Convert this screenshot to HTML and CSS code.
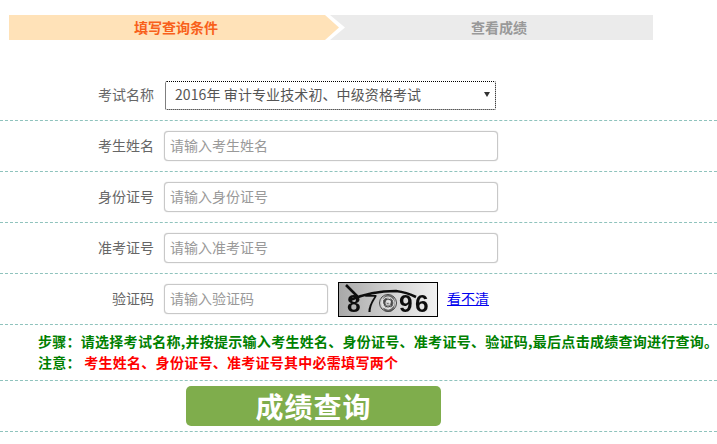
FILE: index.html
```html
<!DOCTYPE html>
<html lang="zh-CN">
<head>
<meta charset="utf-8">
<title>成绩查询</title>
<link rel="stylesheet" href="styles.css">
</head>
<body>
<div class="steps">
  <div class="step-edge"><div class="step-current">填写查询条件</div></div>
  <div class="step-next">查看成绩</div>
</div>
<form class="form">
  <div class="row">
    <label class="label">考试名称</label>
    <div class="select-wrap">
      <select class="select"><option>2016年 审计专业技术初、中级资格考试</option></select>
    </div>
  </div>
  <div class="row">
    <label class="label">考生姓名</label>
    <input class="field" placeholder="请输入考生姓名">
  </div>
  <div class="row">
    <label class="label">身份证号</label>
    <input class="field" placeholder="请输入身份证号">
  </div>
  <div class="row">
    <label class="label">准考证号</label>
    <input class="field" placeholder="请输入准考证号">
  </div>
  <div class="row">
    <label class="label">验证码</label>
    <input class="field field-short" placeholder="请输入验证码">
    <svg class="captcha" width="100" height="35" viewBox="0 0 100 35" role="img" aria-label="验证码图片">
      <defs>
        <linearGradient id="cbg" x1="0" y1="0" x2="1" y2="0">
          <stop offset="0" stop-color="#a8a8a8"/>
          <stop offset="0.5" stop-color="#cfcfcf"/>
          <stop offset="1" stop-color="#f2f2f2"/>
        </linearGradient>
        <filter id="cblur"><feGaussianBlur stdDeviation="0.7"/></filter>
      </defs>
      <rect x="0.5" y="0.5" width="99" height="34" fill="url(#cbg)" stroke="#000"/>
      <g filter="url(#cblur)">
        <text class="captcha-text" y="29.5"><tspan x="9">8</tspan><tspan class="captcha-thin" x="26">7</tspan><tspan class="captcha-faint" x="44">9</tspan><tspan x="61">9</tspan><tspan x="77">6</tspan></text>
        <path d="M8 3 L21 16 M12 18 C26 12 42 9 58 9 C66 10 72 12 78 15" fill="none" stroke="#111" stroke-width="2.6"/>
        <circle cx="50" cy="21" r="8.5" fill="none" stroke="#444" stroke-width="1"/>
        <circle cx="50" cy="21" r="6" fill="none" stroke="#eee" stroke-width="1"/>
        <circle cx="50" cy="21" r="4" fill="none" stroke="#444" stroke-width="1"/>
        <circle cx="50" cy="21" r="2" fill="none" stroke="#eee" stroke-width="1"/>
      </g>
    </svg>
    <a class="refresh" href="#">看不清</a>
  </div>
  <div class="notes">
    <p class="note">步骤：请选择考试名称,并按提示输入考生姓名、身份证号、准考证号、验证码,最后点击成绩查询进行查询。</p>
    <p class="note">注意： <span class="note-red">考生姓名、身份证号、准考证号其中必需填写两个</span></p>
  </div>
  <div class="actions">
    <button class="submit" type="button">成绩查询</button>
  </div>
</form>
</body>
</html>
```
FILE: styles.css
```css
* { box-sizing: border-box; }
html, body { margin: 0; padding: 0; background: #fff; }
body {
  width: 717px;
  height: 444px;
  overflow: hidden;
  font-family: "Noto Sans CJK SC", "Liberation Sans", sans-serif;
  font-size: 14px;
}
.steps {
  display: flex;
  width: 644px;
  height: 25px;
  margin: 15px 0 0 9px;
  background: #ebebeb;
  font-weight: 700;
  line-height: 25px;
}
.step-edge {
  width: 336px;
  height: 25px;
  background: #fff;
  clip-path: polygon(0 0, 321px 0, 336px 50%, 321px 100%, 0 100%);
}
.step-current {
  width: 334px;
  height: 25px;
  background: #ffe2b8;
  color: #f8601a;
  text-align: center;
  clip-path: polygon(0 0, 316px 0, 330px 50%, 316px 100%, 0 100%);
}
.step-next {
  flex: 1;
  text-align: center;
  color: #999;
}
.form { margin-top: 30px; }
.row {
  display: flex;
  align-items: center;
  height: 51px;
  border-bottom: 1px dashed #8fc3bd;
}
.label {
  width: 154px;
  padding-bottom: 2px;
  text-align: right;
  color: #666;
  line-height: 20px;
}
.select-wrap {
  position: relative;
  margin-left: 11px;
  width: 331px;
  height: 29px;
}
.select-wrap::after {
  content: "";
  position: absolute;
  right: 6px;
  top: 11px;
  border-left: 3px solid transparent;
  border-right: 3px solid transparent;
  border-top: 5px solid #333;
  pointer-events: none;
}
.select {
  display: block;
  appearance: none;
  width: 100%;
  height: 100%;
  padding: 0 0 2px 9px;
  border: 1px dotted #000;
  border-radius: 2px;
  background: #fff;
  color: #555;
  font: inherit;
  letter-spacing: 0.1px;
}
.field {
  width: 334px;
  height: 30px;
  margin-left: 10px;
  padding: 0 5px 2px 5px;
  border: 1px solid #c8c8c8;
  border-radius: 4px;
  box-shadow: 0 0 1px #bbb;
  background: #fff;
  color: #555;
  font: inherit;
  outline: none;
}
.field::placeholder { color: #999; opacity: 1; }
.field-short { width: 164px; }
.captcha { display: block; margin-left: 10px; }
.captcha-text {
  font-family: "Liberation Sans", sans-serif;
  font-weight: 700;
  font-size: 24.5px;
  fill: #111;
}
.captcha-thin { font-weight: 400; }
.captcha-faint { fill: #666; }
.refresh {
  margin-left: 9px;
  padding-bottom: 2px;
  color: #00e;
  text-decoration: underline;
  line-height: 20px;
}
.notes {
  height: 56px;
  padding: 6px 0 0 38px;
  border-bottom: 1px dashed #8fc3bd;
}
.note {
  margin: 0;
  height: 21px;
  line-height: 21px;
  color: #008000;
  font-weight: 700;
  letter-spacing: 0.27px;
  white-space: nowrap;
}
.note-red { color: #f00; }
.actions {
  height: 51px;
  padding: 5px 0 0 186px;
  border-bottom: 1px dashed #8fc3bd;
}
.submit {
  display: block;
  width: 255px;
  height: 40px;
  padding: 0;
  border: 0;
  border-radius: 5px;
  background: #7fad4c;
  color: #fff;
  font: 700 28px/40px "Noto Sans CJK SC", "Liberation Sans", sans-serif;
  letter-spacing: 1px;
}
```
